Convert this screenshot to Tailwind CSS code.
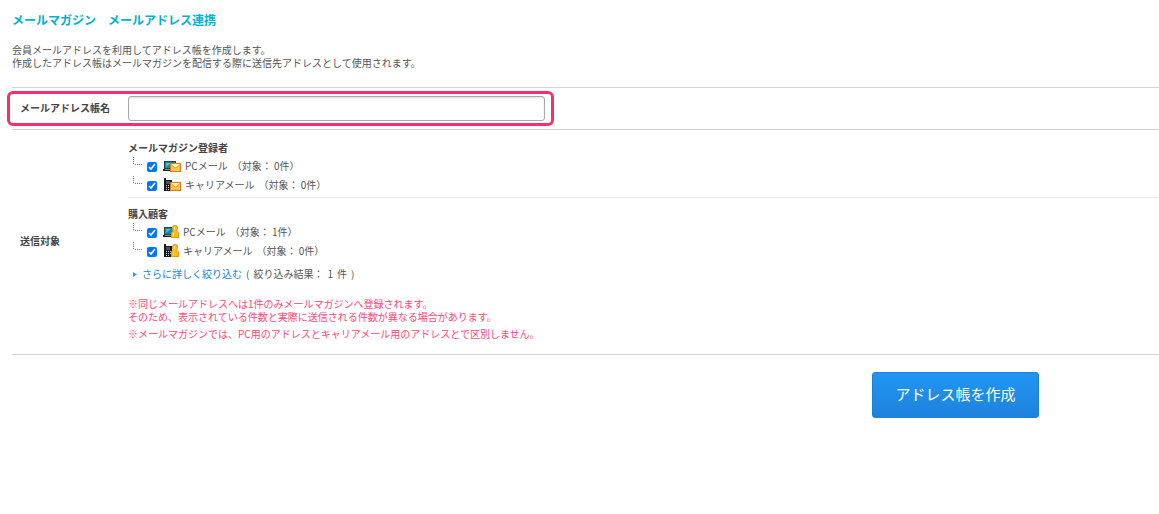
<!DOCTYPE html>
<html lang="ja">
<head>
<meta charset="utf-8">
<title>メールアドレス連携</title>
<script src="https://cdn.jsdelivr.net/npm/@tailwindcss/browser@4"></script>
</head>
<body class="bg-white font-['Noto_Sans_CJK_JP',sans-serif] text-[10px] leading-[13px] text-[#555]">
<svg class="hidden" aria-hidden="true">
  <defs>
    <symbol id="branch" viewBox="0 0 10 9">
      <path d="M.5 0V8M2 7.5H10" fill="none" stroke="#777" stroke-dasharray="1 1"/>
    </symbol>
    <symbol id="laptop" viewBox="0 0 18 14">
      <path d="M1 2h12v8H1z" fill="#24424a"/>
      <path d="M2 3h10v6H2z" fill="#128c9c"/>
      <path d="M3 4h5L3 8z" fill="#48c3ca"/>
      <path d="M0 10h14v2H0z" fill="#1c2226"/>
      <path d="M2 10h9v1H2z" fill="#7b9299"/>
    </symbol>
    <symbol id="phone" viewBox="0 0 18 14">
      <path d="M1 0h2v2h6v11H1z" fill="#15181c"/>
      <path d="M3 3h4v3H3z" fill="#46535c"/>
      <path d="M3 7h1v1H3zM5 7h1v1H5zM7 7h1v1H7zM3 9h1v1H3zM5 9h1v1H5zM7 9h1v1H7zM3 11h1v1H3zM5 11h1v1H5z" fill="#c3cdd2"/>
    </symbol>
    <symbol id="envelope" viewBox="0 0 18 14">
      <path d="M7 4h11v9H7z" fill="#d9791a"/>
      <path d="M8 5h9v7H8z" fill="#ffc84a"/>
      <path d="M8 5h9l-4 4h-1z" fill="#fff3bd"/>
      <path d="M8 5.500l4 3.500h1l4-3.500" fill="none" stroke="#f09a2a"/>
    </symbol>
    <symbol id="person" viewBox="0 0 18 14">
      <path d="M8 13V8q0-1 2-2-1-1-1-3 0-3 3-3t3 3q0 2-1 3 2 1 2 2v5z" fill="#ee9614"/>
      <path d="M9 12V8q0-1 2-2-1-1-1-3 0-2 2-2t2 2q0 2-1 3 2 1 2 2v4z" fill="#ffbd22"/>
      <path d="M11 2h1v3h-1zM10 8h1v3h-1z" fill="#ffe083"/>
    </symbol>
  </defs>
</svg>
<main class="pt-3 pl-3">
  <h1 class="text-xs leading-4 font-bold text-[#00b2d0]">メールマガジン　メールアドレス連携</h1>
  <p class="mt-[15px]">会員メールアドレスを利用してアドレス帳を作成します。<br>作成したアドレス帳はメールマガジンを配信する際に送信先アドレスとして使用されます。</p>

  <form>
    <div class="relative mt-[18px] flex items-center border-y border-[#d4d4d4] py-2">
      <label for="book-name" class="w-[116px] shrink-0 pb-0.5 pl-2 font-bold text-[#444]">メールアドレス帳名</label>
      <input id="book-name" type="text" class="h-[25px] w-[417px] rounded-[3px] border border-[#aaa] bg-white px-2 shadow-[inset_0_1px_2px_#ddd] outline-none">
      <span class="pointer-events-none absolute -left-[5px] top-[3px] h-[35px] w-[547px] rounded-md border-3 border-[#f92f6c]"></span>
    </div>

    <div role="group" aria-labelledby="target" class="flex items-center border-b border-[#d4d4d4]">
      <div id="target" class="w-[116px] shrink-0 pb-1 pl-2 font-bold text-[#444]">送信対象</div>
      <div class="grow pt-[9px] pb-[14px]">
        <section class="border-b border-[#e8e8e8] pb-[3px]">
          <h2 class="leading-[17px] font-bold text-[#444]">メールマガジン登録者</h2>
          <label class="flex h-[19px] items-center pl-[5px]">
            <svg class="mb-2 h-[9px] w-[10px]"><use href="#branch"/></svg>
            <input type="checkbox" checked class="mx-1 mt-0.5 size-[10px] accent-[#0075ff]">
            <svg class="ml-0.5 mr-1 h-[14px] w-[18px]"><use href="#laptop"/><use href="#envelope"/></svg>
            <span class="mr-1">PCメール</span><span>（対象： 0件）</span>
          </label>
          <label class="flex h-[19px] items-center pl-[5px]">
            <svg class="mb-2 h-[9px] w-[10px]"><use href="#branch"/></svg>
            <input type="checkbox" checked class="mx-1 mt-0.5 size-[10px] accent-[#0075ff]">
            <svg class="ml-0.5 mr-1 h-[14px] w-[18px]"><use href="#phone"/><use href="#envelope"/></svg>
            <span class="mr-1">キャリアメール</span><span>（対象： 0件）</span>
          </label>
        </section>
        <section class="pt-[7px]">
          <h2 class="leading-[17px] font-bold text-[#444]">購入顧客</h2>
          <label class="flex h-[19px] items-center pl-[5px]">
            <svg class="mb-2 h-[9px] w-[10px]"><use href="#branch"/></svg>
            <input type="checkbox" checked class="mx-1 mt-0.5 size-[10px] accent-[#0075ff]">
            <svg class="ml-0.5 mr-0.5 h-[14px] w-[18px]"><use href="#laptop"/><use href="#person"/></svg>
            <span class="mr-1">PCメール</span><span>（対象： 1件）</span>
          </label>
          <label class="flex h-[19px] items-center pl-[5px]">
            <svg class="mb-2 h-[9px] w-[10px]"><use href="#branch"/></svg>
            <input type="checkbox" checked class="mx-1 mt-0.5 size-[10px] accent-[#0075ff]">
            <svg class="ml-0.5 mr-0.5 h-[14px] w-[18px]"><use href="#phone"/><use href="#person"/></svg>
            <span class="mr-1">キャリアメール</span><span>（対象： 0件）</span>
          </label>
        </section>
        <p class="mt-[7px] flex items-center gap-1 pl-[5px] leading-[14px]">
          <svg class="mr-px h-[5px] w-1" viewBox="0 0 4 5"><path d="M0 0 4 2.500 0 5z" fill="#2aa5b5"/></svg>
          <a href="#" class="text-[#1685d9]">さらに詳しく絞り込む</a>
          <span>(</span><span>絞り込み結果：</span><span>1</span><span>件</span><span>)</span>
        </p>
        <div class="mt-4 text-[#ff4778]">
          <p>※同じメールアドレスへは1件のみメールマガジンへ登録されます。<br>そのため、表示されている件数と実際に送信される件数が異なる場合があります。</p>
          <p class="mt-1">※メールマガジンでは、PC用のアドレスとキャリアメール用のアドレスとで区別しません。</p>
        </div>
      </div>
    </div>

    <div class="mt-[17px] mr-[120px] flex justify-end">
      <button type="button" class="h-[46px] w-[167px] rounded-[3px] border border-[#1c7fd5] bg-linear-to-b from-[#2196f3] to-[#1e82dc] pb-1 text-[15px] text-white">アドレス帳を作成</button>
    </div>
  </form>
</main>
</body>
</html>
